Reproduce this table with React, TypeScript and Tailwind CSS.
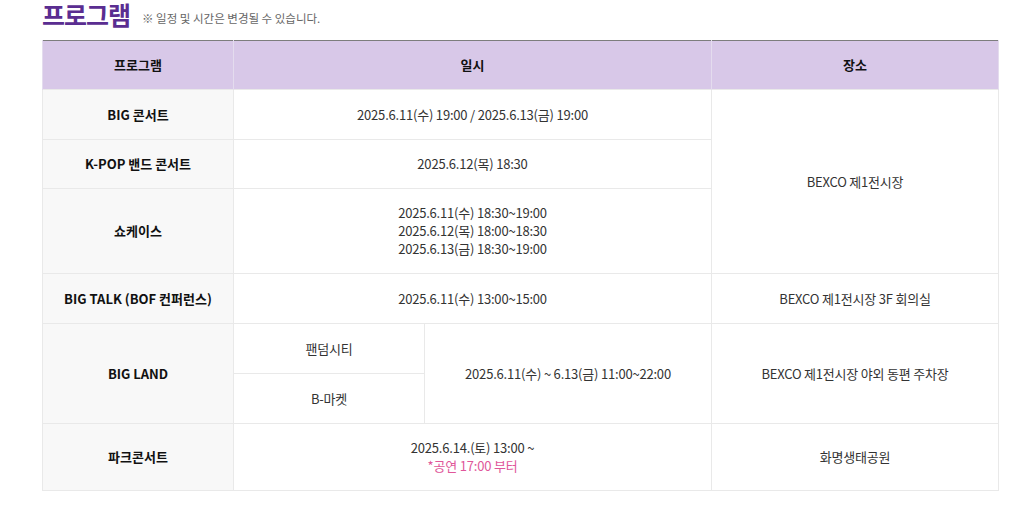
import React from "react";

const font = { fontFamily: '"Noto Sans CJK KR", "Noto Sans", sans-serif' };

export default function App() {
  const th = "bg-[#d8c8e8] border-l border-r border-[#e4dcee] font-bold text-[13px] text-[#111] text-center h-[49px]";
  const first = "bg-[#f8f8f8] border border-[#e9e9e9] font-bold text-[13px] text-[#111] text-center";
  const td = "bg-white border border-[#e9e9e9] text-[13px] text-[#333] text-center leading-[18px] tracking-[-0.2px]";
  return (
    <div className="w-[1024px] h-[517px] bg-white overflow-hidden" style={font}>
      <div className="pl-[42px] flex items-end gap-[12px] h-[28px]">
        <h2 className="text-[25px] leading-[28px] font-bold text-[#5a2d91] tracking-[-1px]">프로그램</h2>
        <span className="text-[11.5px] text-[#666] leading-none pb-[4px]">※ 일정 및 시간은 변경될 수 있습니다.</span>
      </div>
      <div className="pl-[42px] pt-[12px]">
        <table className="w-[956px] border-collapse table-fixed border-t border-t-[#7d7d7d]">
          <colgroup>
            <col className="w-[191px]" />
            <col className="w-[191px]" />
            <col className="w-[287px]" />
            <col className="w-[287px]" />
          </colgroup>
          <thead>
            <tr>
              <th className={th}>프로그램</th>
              <th className={th} colSpan={2}>일시</th>
              <th className={th}>장소</th>
            </tr>
          </thead>
          <tbody>
            <tr className="h-[50px]">
              <td className={first}>BIG 콘서트</td>
              <td className={td} colSpan={2}>2025.6.11(수) 19:00 / 2025.6.13(금) 19:00</td>
              <td className={td} rowSpan={3}>BEXCO 제1전시장</td>
            </tr>
            <tr className="h-[49px]">
              <td className={first}>K-POP 밴드 콘서트</td>
              <td className={td} colSpan={2}>2025.6.12(목) 18:30</td>
            </tr>
            <tr className="h-[85px]">
              <td className={first}>쇼케이스</td>
              <td className={td} colSpan={2}>
                2025.6.11(수) 18:30~19:00<br />
                2025.6.12(목) 18:00~18:30<br />
                2025.6.13(금) 18:30~19:00
              </td>
            </tr>
            <tr className="h-[50px]">
              <td className={first}>BIG TALK (BOF 컨퍼런스)</td>
              <td className={td} colSpan={2}>2025.6.11(수) 13:00~15:00</td>
              <td className={td}>BEXCO 제1전시장 3F 회의실</td>
            </tr>
            <tr className="h-[50px]">
              <td className={first} rowSpan={2}>BIG LAND</td>
              <td className={td}>팬덤시티</td>
              <td className={td} rowSpan={2}>2025.6.11(수) ~ 6.13(금) 11:00~22:00</td>
              <td className={td} rowSpan={2}>BEXCO 제1전시장 야외 동편 주차장</td>
            </tr>
            <tr className="h-[50px]">
              <td className={td}>B-마켓</td>
            </tr>
            <tr className="h-[67px]">
              <td className={first}>파크콘서트</td>
              <td className={td} colSpan={2}>
                2025.6.14.(토) 13:00 ~<br />
                <span className="text-[#e0569a]">*공연 17:00 부터</span>
              </td>
              <td className={td}>화명생태공원</td>
            </tr>
          </tbody>
        </table>
      </div>
    </div>
  );
}
